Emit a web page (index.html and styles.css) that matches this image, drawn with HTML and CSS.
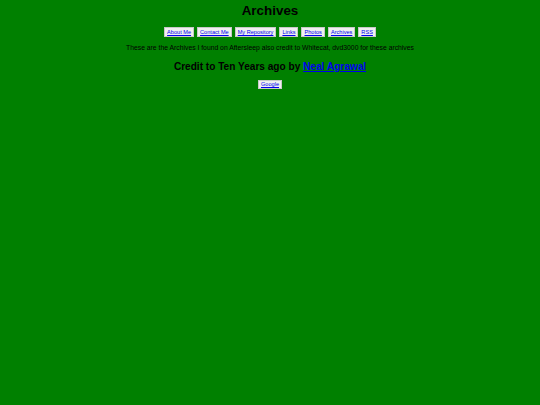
FILE: index.html
```html
<!DOCTYPE html>
<html>
<head>
<meta charset="utf-8">
<link rel="stylesheet" href="styles.css">
</head>
<body>
<div class="page">
  <h1 class="title">Archives</h1>
  <nav class="nav">
    <a class="btn" href="#">About Me</a>
    <a class="btn" href="#">Contact Me</a>
    <a class="btn" href="#">My Repository</a>
    <a class="btn" href="#">Links</a>
    <a class="btn" href="#">Photos</a>
    <a class="btn" href="#">Archives</a>
    <a class="btn" href="#">RSS</a>
  </nav>
  <p class="intro">These are the Archives I found on Aftersleep also credit to Whitecat, dvd3000 for these archives</p>
  <h2 class="credit">Credit to Ten Years ago by <a class="credit-link" href="#">Neal Agrawal</a></h2>
  <div class="google-row"><a class="btn" href="#">Google</a></div>
</div>
</body>
</html>
```
FILE: styles.css
```css
html, body {
  margin: 0;
  padding: 0;
  background: #008000;
}
body {
  font-family: "Liberation Sans", Arial, sans-serif;
  color: #000;
}
.page {
  display: flex;
  flex-direction: column;
  align-items: center;
  padding-top: 3px;
}
.title {
  margin: 0;
  font-size: 13.4px;
  line-height: 16px;
  font-weight: bold;
}
.nav {
  display: flex;
  gap: 3px;
  margin-top: 8px;
}
.btn {
  display: block;
  background: #f0f0f0;
  border: 1px solid #c8c8c8;
  color: #0000ee;
  font-size: 5.6px;
  line-height: 8px;
  padding: 0 2px;
  text-decoration: underline;
}
.intro {
  margin: 6px 0 0;
  font-size: 6.8px;
  line-height: 9px;
}
.credit {
  margin: 8px 0 0;
  font-size: 10.1px;
  line-height: 13px;
  font-weight: bold;
}
.credit-link {
  color: #0000ee;
}
.google-row {
  margin-top: 7px;
}
.google-row .btn {
  line-height: 7px;
}
```
